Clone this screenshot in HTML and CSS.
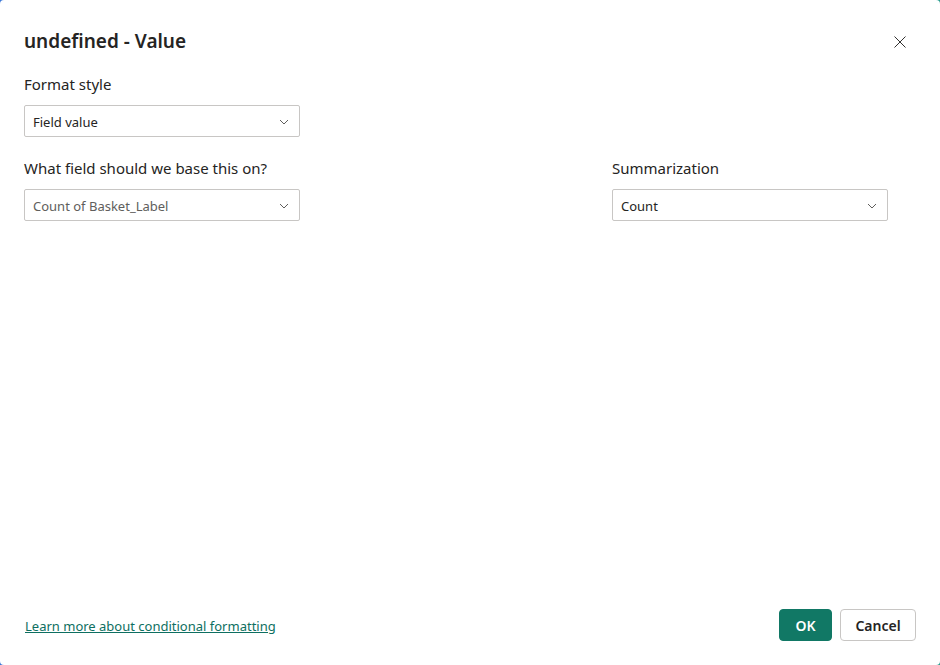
FILE: index.html
```html
<!DOCTYPE html>
<html lang="en">
<head>
    <meta charset="UTF-8">
    <meta name="viewport" content="width=device-width, initial-scale=1.0">
    <title>undefined - Value</title>
    <link rel="stylesheet" href="styles.css">
</head>
<body>
    <div class="dialog">
        <div class="dialog-header">
            <h1 class="dialog-title">undefined - Value</h1>
            <button class="close-btn" aria-label="Close">
                <svg viewBox="0 0 12 12"><path d="M0.5 0.5L11.5 11.5M11.5 0.5L0.5 11.5"/></svg>
            </button>
        </div>

        <div class="field">
            <label class="field-label">Format style</label>
            <div class="dropdown">
                <span class="dropdown-text">Field value</span>
                <svg class="chevron" viewBox="0 0 10 10"><path d="M1 3L5 7L9 3"/></svg>
            </div>
        </div>

        <div class="field-row">
            <div class="field">
                <label class="field-label">What field should we base this on?</label>
                <div class="dropdown disabled">
                    <span class="dropdown-text">Count of Basket_Label</span>
                    <svg class="chevron" viewBox="0 0 10 10"><path d="M1 3L5 7L9 3"/></svg>
                </div>
            </div>
            <div class="field">
                <label class="field-label">Summarization</label>
                <div class="dropdown">
                    <span class="dropdown-text">Count</span>
                    <svg class="chevron" viewBox="0 0 10 10"><path d="M1 3L5 7L9 3"/></svg>
                </div>
            </div>
        </div>

        <div class="dialog-footer">
            <a class="learn-link" href="#">Learn more about conditional formatting</a>
            <div class="actions">
                <button class="btn btn-primary">OK</button>
                <button class="btn btn-cancel">Cancel</button>
            </div>
        </div>
    </div>
</body>
</html>
```

FILE: styles.css
```css
:root {
    --text: #252423;
    --muted: #605e5c;
    --border: #c8c6c4;
    --brand: #117865;
}

html, body {
    height: 100%;
}

body {
    margin: 0;
    font-family: 'Noto Sans', 'Open Sans', sans-serif;
    color: var(--text);
    /* the report canvas peeking out behind the rounded corners */
    background: linear-gradient(90deg, #3b78d8 0%, #6a5fa8 48%, #d8c24a 52%, #2a9d8f 100%);
}

.dialog {
    box-sizing: border-box;
    height: 100%;
    background: #fff;
    border-radius: 4px;
    padding: 25px 24px 24px 24px;
    display: flex;
    flex-direction: column;
}

.dialog-header {
    display: flex;
    align-items: center;
    justify-content: space-between;
    height: 32px;
    margin-bottom: 17px;
}

.dialog-title {
    margin: 0;
    font-size: 19px;
    font-weight: 600;
    line-height: 32px;
}

.close-btn {
    width: 32px;
    height: 32px;
    margin-top: 2px;
    padding: 0;
    border: none;
    background: none;
    display: flex;
    align-items: center;
    justify-content: center;
    cursor: pointer;
}

.close-btn svg {
    width: 12px;
    height: 12px;
    stroke: #323130;
    stroke-width: 1;
    fill: none;
}

.field {
    width: 276px;
    display: flex;
    flex-direction: column;
}

.field-label {
    font-size: 15px;
    line-height: 20px;
    margin-bottom: 11px;
}

.field-row {
    display: flex;
    gap: 312px;
    margin-top: 21px;
}

.dropdown {
    box-sizing: border-box;
    height: 32px;
    border: 1px solid var(--border);
    border-radius: 2px;
    display: flex;
    align-items: center;
    justify-content: space-between;
    padding: 1px 8px 0 8px;
    font-size: 13px;
}

.dropdown.disabled .dropdown-text {
    color: var(--muted);
}

.chevron {
    width: 10px;
    height: 10px;
    margin-right: 2px;
    stroke: #605e5c;
    stroke-width: 1;
    fill: none;
}

.dialog-footer {
    margin-top: auto;
    display: flex;
    align-items: center;
    justify-content: space-between;
}

.learn-link {
    margin-left: 1px;
    padding-top: 2px;
    font-size: 13px;
    color: #0e6f61;
    text-decoration: underline;
}

.actions {
    display: flex;
    gap: 8px;
}

.btn {
    box-sizing: border-box;
    height: 32px;
    width: 76px;
    padding: 0;
    border: 1px solid var(--border);
    border-radius: 4px;
    background: #fff;
    font-family: inherit;
    font-size: 14px;
    font-weight: 600;
    color: var(--text);
    cursor: pointer;
}

.btn-primary {
    width: 53px;
    background: var(--brand);
    border-color: var(--brand);
    color: #fff;
}
```
